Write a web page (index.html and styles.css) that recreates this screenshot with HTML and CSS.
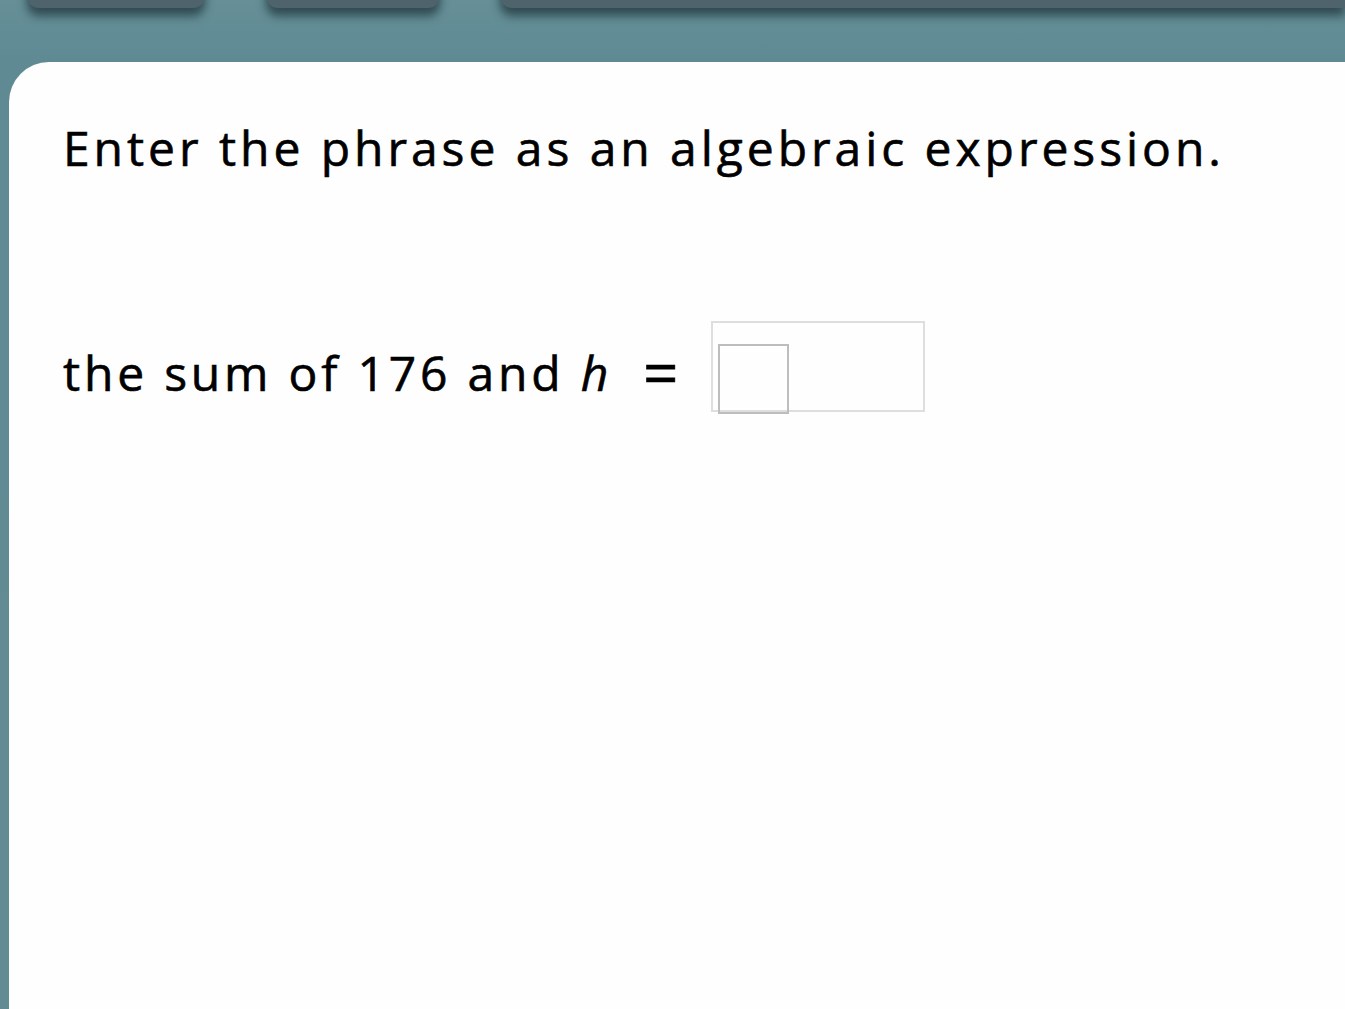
FILE: index.html
```html
<!DOCTYPE html>
<html lang="en">
<head>
  <meta charset="UTF-8">
  <title>Algebraic expression</title>
  <link rel="stylesheet" href="styles.css">
</head>
<body>
  <div class="tabs">
    <div class="tab tab-one"></div>
    <div class="tab tab-two"></div>
    <div class="tab tab-three"></div>
  </div>
  <div class="card">
    <p class="prompt">Enter the phrase as an algebraic expression.</p>
    <div class="question">
      <span class="phrase">the sum of 176 and <i class="var">h</i></span>
      <span class="equals">=</span>
      <div class="answer">
        <div class="slot"></div>
      </div>
    </div>
  </div>
</body>
</html>
```

FILE: styles.css
```css
html, body {
  margin: 0;
  height: 100%;
}
body {
  background: linear-gradient(#668f97, #5f8a94 60px, #638b93);
  font-family: "Open Sans", "Noto Sans", sans-serif;
  color: #000;
  overflow: hidden;
}
.tabs {
  display: flex;
  height: 8px;
  padding-left: 27px;
}
.tab {
  flex: 0 0 auto;
  height: 30px;
  margin-top: -22px;
  background: #4f636c;
  border-radius: 0 0 12px 12px;
  box-shadow: 0 8px 10px rgba(20, 40, 45, 0.65);
}
.tab-one {
  width: 178px;
}
.tab-two {
  width: 174px;
  margin-left: 61px;
}
.tab-three {
  flex: 1;
  margin-left: 60px;
  border-bottom-right-radius: 0;
}
.card {
  margin: 54px 0 0 9px;
  height: calc(100% - 62px);
  background: #fefefe;
  border-top-left-radius: 40px;
  padding: 0 0 0 54px;
}
.prompt {
  margin: 0;
  padding-top: 52px;
  font-size: 48px;
  letter-spacing: 3.95px;
  line-height: 68px;
  -webkit-text-stroke: 0.6px #000;
}
.question {
  display: flex;
  align-items: center;
  margin-top: 150px;
  font-size: 48px;
  letter-spacing: 3.8px;
  -webkit-text-stroke: 0.6px #000;
}
.var {
  font-style: italic;
}
.equals {
  margin-left: 31px;
  font-size: 62px;
  letter-spacing: 0;
  line-height: 1;
}
.answer {
  margin-left: 32px;
  width: 210px;
  height: 87px;
  border: 2px solid #dedede;
  position: relative;
  margin-top: -11px;
}
.slot {
  position: absolute;
  left: 5px;
  top: 21px;
  width: 67px;
  height: 66px;
  border: 2px solid #bdbdbd;
}
```
